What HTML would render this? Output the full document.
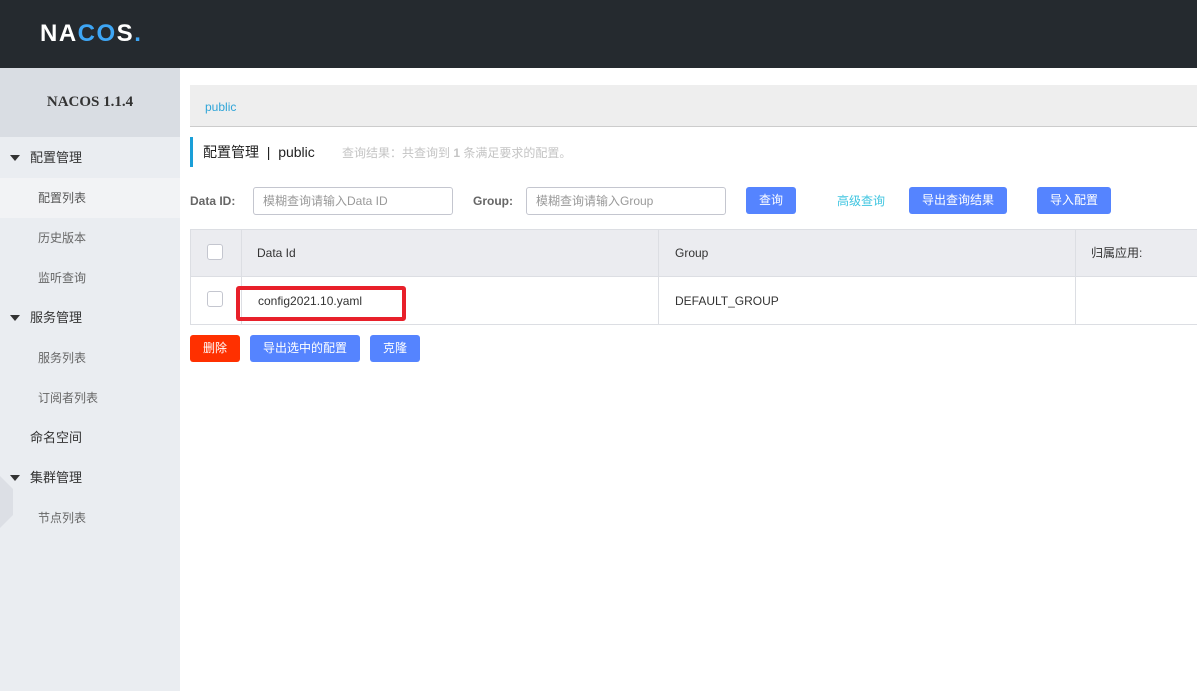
<!DOCTYPE html>
<html><head><meta charset="utf-8"><style>
*{margin:0;padding:0;box-sizing:border-box}
body{width:1197px;height:691px;overflow:hidden;background:#fff;font-family:"Liberation Sans","Noto Sans CJK SC",sans-serif;font-size:12px;color:#333;position:relative}
.hdr{position:absolute;left:0;top:0;width:1197px;height:68px;background:#252a2f}
.logo{position:absolute;left:40px;top:20px;color:#fff;font-size:24px;font-weight:bold;letter-spacing:1.5px}
.side{position:absolute;left:0;top:68px;width:180px;height:623px;background:#eaedf1}
.ver{height:69px;background:#d9dde3;text-align:center;line-height:69px;font-family:"Liberation Serif",serif;font-weight:bold;font-size:15px;color:#333}
.mi{position:absolute;font-size:13px;color:#333;line-height:16px}
.sub{position:absolute;left:38px;font-size:12px;color:#666;line-height:16px}
.tri{position:absolute;left:10px;width:0;height:0;border-left:5px solid transparent;border-right:5px solid transparent;border-top:6px solid #333}
.abs{position:absolute;line-height:16px}
.btn{position:absolute;background:#5584ff;color:#fff;border-radius:3px;text-align:center;font-size:12px;line-height:26px;height:27px}
.inp{position:absolute;border:1px solid #c4c6cf;border-radius:3px;height:28px;line-height:26px;padding-left:9px;color:#999;font-size:12px}
.cb{position:absolute;width:16px;height:16px;border:1px solid #c4c6cf;border-radius:3px;background:#fff}
</style></head><body>
<div class="hdr"><div class="logo">NA<span style="color:#3ea6f5">CO</span>S<span style="color:#3ea6f5">.</span></div></div>
<div class="side"><div class="ver">NACOS 1.1.4</div>
<div style="position:absolute;left:0;top:110px;width:180px;height:40px;background:#f2f3f5"></div>
<div class="tri" style="top:87px"></div><div class="mi" style="left:30px;top:82px">配置管理</div>
<div class="sub" style="top:122px;color:#555">配置列表</div>
<div class="sub" style="top:162px">历史版本</div>
<div class="sub" style="top:202px">监听查询</div>
<div class="tri" style="top:247px"></div><div class="mi" style="left:30px;top:242px">服务管理</div>
<div class="sub" style="top:282px">服务列表</div>
<div class="sub" style="top:322px">订阅者列表</div>
<div class="mi" style="left:30px;top:362px">命名空间</div>
<div class="tri" style="top:407px"></div><div class="mi" style="left:30px;top:402px">集群管理</div>
<div class="sub" style="top:442px">节点列表</div>
<div style="position:absolute;left:0;top:408px;width:13px;height:52px;background:#dcdfe5;clip-path:polygon(0 0,100% 25%,100% 75%,0 100%)"></div>
</div>
<div class="abs" style="left:190px;top:85px;width:1007px;height:42px;background:#eeeeee;border-bottom:1px solid #ccc"></div>
<div class="abs" style="left:205px;top:99px;color:#2fa5d8;font-size:12px">public</div>
<div class="abs" style="left:190px;top:137px;width:3px;height:30px;background:#1a9fd8"></div>
<div class="abs" style="left:203px;top:144px;font-size:14px;color:#222">配置管理 &nbsp;| &nbsp;public</div>
<div class="abs" style="left:342px;top:145px;font-size:12px;color:#c4c4c4">查询结果：共查询到 <b>1</b> 条满足要求的配置。</div>
<div class="abs" style="left:190px;top:193px;font-weight:bold;color:#666;font-size:12px">Data ID:</div>
<div class="inp" style="left:253px;top:187px;width:200px">模糊查询请输入Data ID</div>
<div class="abs" style="left:473px;top:193px;font-weight:bold;color:#666;font-size:12px">Group:</div>
<div class="inp" style="left:526px;top:187px;width:200px">模糊查询请输入Group</div>
<div class="btn" style="left:746px;top:187px;width:50px">查询</div>
<div class="abs" style="left:837px;top:193px;color:#3fc5e0">高级查询</div>
<div class="btn" style="left:909px;top:187px;width:98px">导出查询结果</div>
<div class="btn" style="left:1037px;top:187px;width:74px">导入配置</div>
<div class="abs" style="left:190px;top:229px;width:1007px;height:96px;border:1px solid #dcdee3;border-right:none"></div>
<div class="abs" style="left:191px;top:230px;width:1006px;height:47px;background:#ebecf0;border-bottom:1px solid #dcdee3"></div>
<div class="abs" style="left:241px;top:230px;width:1px;height:94px;background:#dcdee3"></div>
<div class="abs" style="left:658px;top:230px;width:1px;height:94px;background:#dcdee3"></div>
<div class="abs" style="left:1075px;top:230px;width:1px;height:94px;background:#dcdee3"></div>
<div class="cb" style="left:207px;top:244px"></div>
<div class="cb" style="left:207px;top:291px"></div>
<div class="abs" style="left:257px;top:245px">Data Id</div>
<div class="abs" style="left:675px;top:245px">Group</div>
<div class="abs" style="left:1091px;top:245px">归属应用:</div>
<div class="abs" style="left:236px;top:286px;width:170px;height:35px;border:4px solid #e8202a;border-radius:3px"></div>
<div class="abs" style="left:258px;top:293px">config2021.10.yaml</div>
<div class="abs" style="left:675px;top:293px">DEFAULT_GROUP</div>
<div class="btn" style="left:190px;top:335px;width:50px;background:#ff3000">删除</div>
<div class="btn" style="left:250px;top:335px;width:110px">导出选中的配置</div>
<div class="btn" style="left:370px;top:335px;width:50px">克隆</div>
</body></html>
